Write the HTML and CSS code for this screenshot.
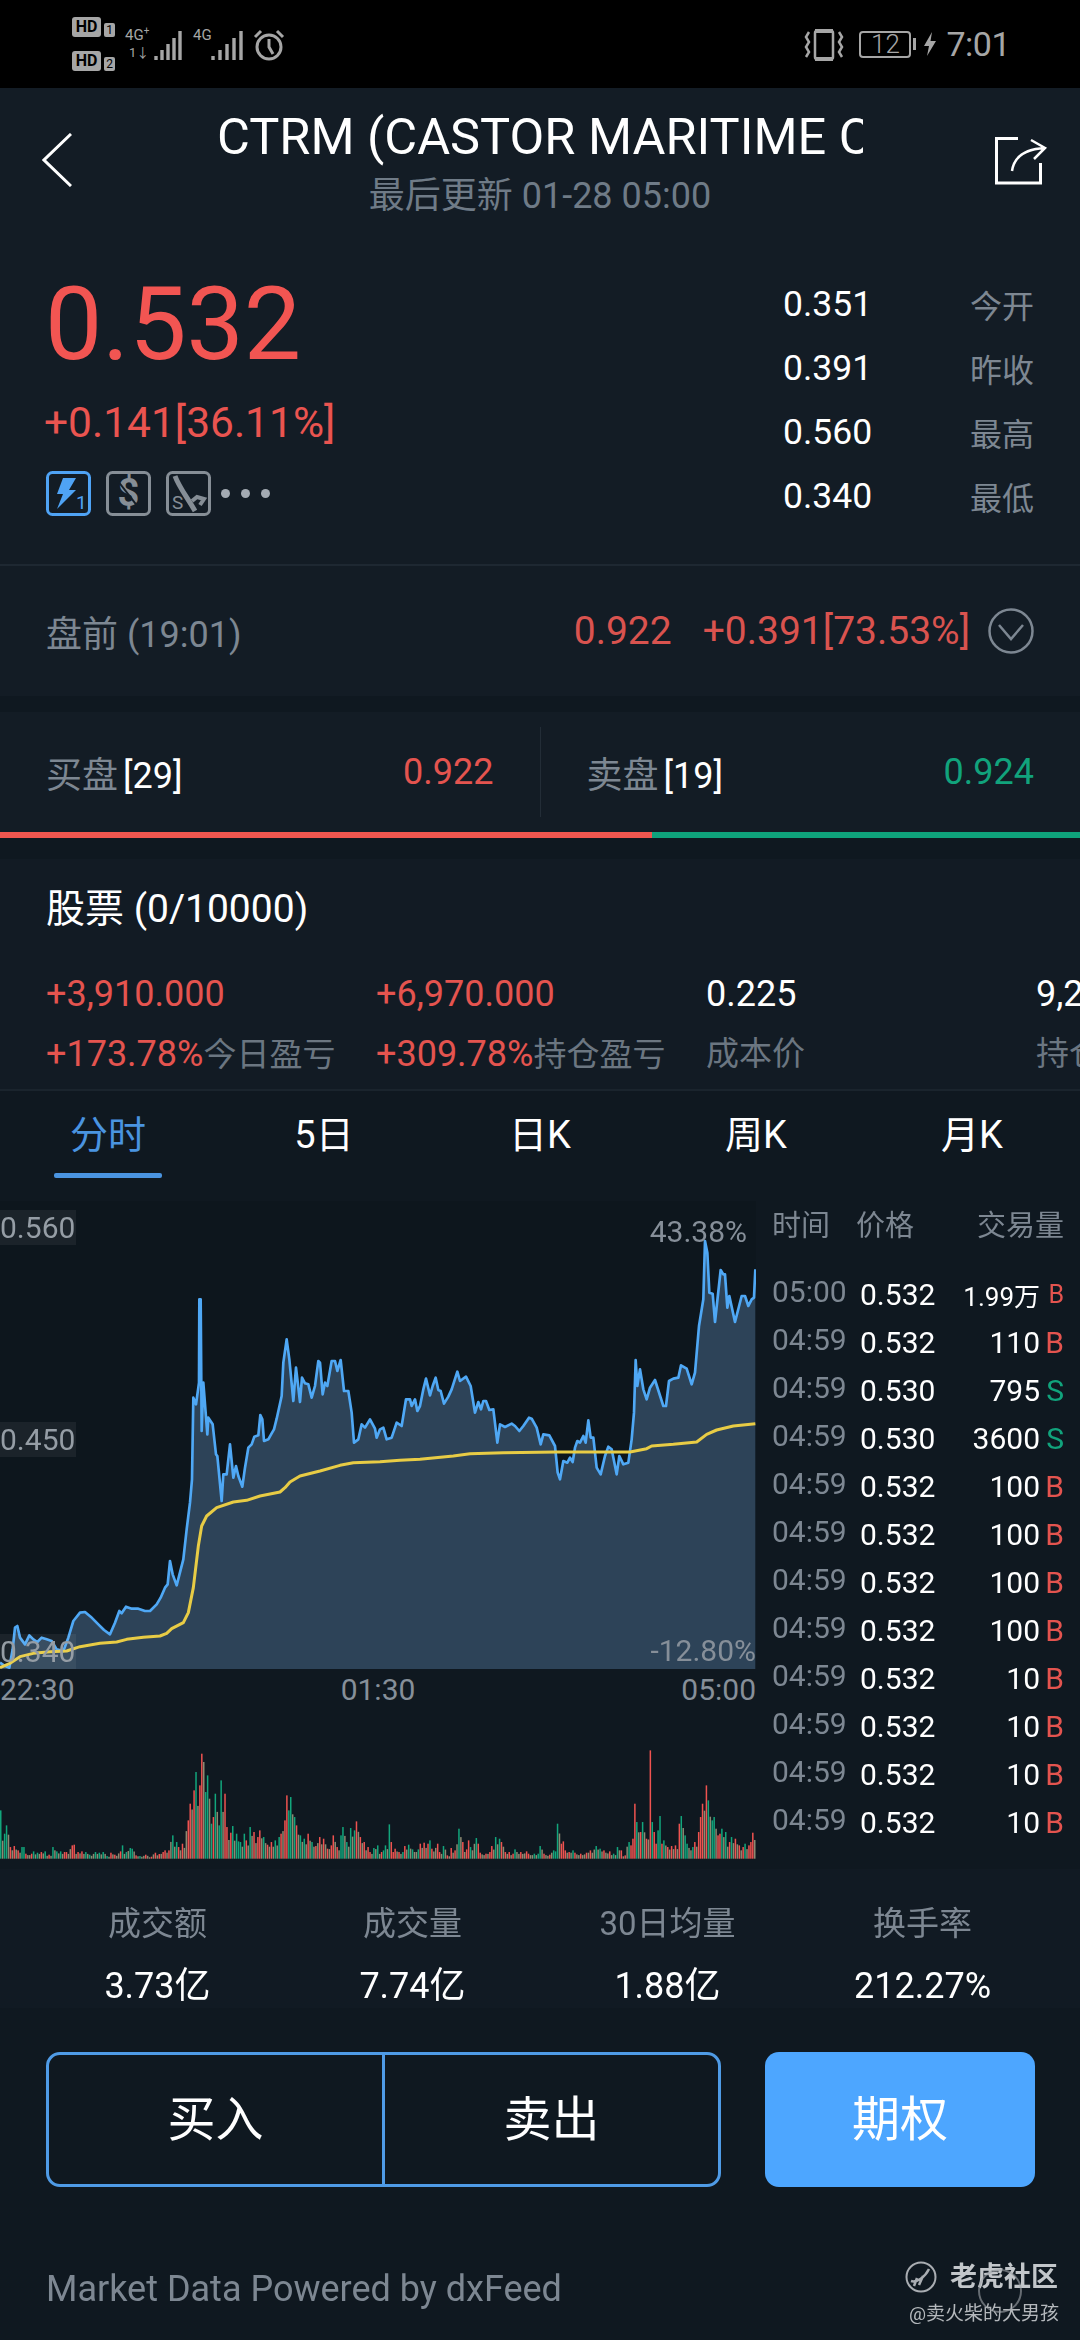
FILE: index.html
```html
<!DOCTYPE html>
<html lang="zh">
<head>
    <meta charset="UTF-8">
    <meta name="viewport" content="width=device-width, initial-scale=1.0">
    <title>CTRM</title>
    <link rel="stylesheet" href="styles.css">
</head>
<body>
    <div class="status-bar">
        <div class="hd-stack">
            <div class="hd"><span class="hd-box">HD</span><span class="hd-num">1</span></div>
            <div class="hd"><span class="hd-box">HD</span><span class="hd-num">2</span></div>
        </div>
        <div class="net net-first">
            <span class="net-text">4G<sup>+</sup></span>
            <span class="net-sub">1↓</span>
        </div>
        <svg class="bars" width="30" height="30" viewBox="0 0 30 30">
            <path d="M2 30V26M8 30V20M14 30V14M20 30V8M26 30V1" stroke="#a6a6a6" stroke-width="3.4"/>
        </svg>
        <div class="net net-second"><span class="net-text">4G</span></div>
        <svg class="bars" width="34" height="30" viewBox="0 0 34 30">
            <path d="M2 30V26M9 30V20M16 30V14M23 30V8M30 30V1" stroke="#a6a6a6" stroke-width="3.4"/>
        </svg>
        <svg class="alarm" width="32" height="32" viewBox="0 0 32 32" fill="none" stroke="#a6a6a6" stroke-width="3">
            <circle cx="16" cy="18" r="12"/>
            <path d="M16 10V18L20 25M2 8L8 2M30 8L24 2"/>
        </svg>
        <svg class="vibrate" width="40" height="32" viewBox="0 0 40 32" fill="none" stroke="#a6a6a6" stroke-width="2.5">
            <rect x="11" y="2" width="18" height="28" rx="2"/>
            <path d="M11 2H29" stroke-width="4"/>
            <path d="M11 30H29" stroke-width="4"/>
            <path d="M5 3L2 8L5 13L2 18L5 23L2 28M35 3L38 8L35 13L38 18L35 23L38 28"/>
        </svg>
        <div class="battery">12</div>
        <span class="battery-nub"></span>
        <svg class="bolt" width="12" height="24" viewBox="0 0 12 24">
            <path d="M8 0L0 14H5L3 24L12 9H6.5Z" fill="#a6a6a6"/>
        </svg>
        <span class="clock">7:01</span>
    </div>

    <div class="header">
        <svg class="back" width="30" height="54" viewBox="0 0 30 54" fill="none" stroke="#fff" stroke-width="3">
            <path d="M29 1L2 27L29 53"/>
        </svg>
        <div class="title-block">
            <div class="title">CTRM (CASTOR MARITIME CORP)</div>
            <div class="subtitle">最后更新 01-28 05:00</div>
        </div>
        <svg class="share" width="54" height="48" viewBox="0 0 54 48" fill="none" stroke="#fff" stroke-width="3">
            <path d="M23 1.5H1.5V46H45.5V26"/>
            <path d="M17 34C19 20 30 12 50 11M36 3L50 11L39 22" stroke-width="2.5"/>
        </svg>
    </div>

    <div class="quote">
        <div class="quote-main">
            <div class="price">0.532</div>
            <div class="change">+0.141[36.11%]</div>
            <div class="badges">
                <svg width="45" height="45" viewBox="0 0 45 45" fill="none">
                    <rect x="1.5" y="1.5" width="42" height="42" rx="5" stroke="#4fa3f5" stroke-width="3"/>
                    <path d="M17 7H30L23 19H30L11 38L17 23H11Z" fill="#4fa3f5"/>
                    <text x="30" y="38" class="badge-text-blue">1</text>
                </svg>
                <svg width="45" height="45" viewBox="0 0 45 45" fill="none">
                    <rect x="1.5" y="1.5" width="42" height="42" rx="5" stroke="#868e96" stroke-width="3"/>
                    <text x="22.5" y="35" class="badge-dollar">$</text>
                    <path d="M8 5L36 41" stroke="#131c25" stroke-width="2"/>
                </svg>
                <svg width="45" height="45" viewBox="0 0 45 45" fill="none">
                    <rect x="1.5" y="1.5" width="42" height="42" rx="5" stroke="#868e96" stroke-width="3"/>
                    <path d="M9 5C13 16 21 26 29 40" stroke="#868e96" stroke-width="5"/>
                    <path d="M26 30L31 26L38 28L34 34" stroke="#868e96" stroke-width="4"/>
                    <text x="6" y="38" class="badge-text">S</text>
                </svg>
                <div class="dots"><span></span><span></span><span></span></div>
            </div>
        </div>
        <div class="quote-stats">
            <div class="stat-row"><span>0.351</span><span class="muted">今开</span></div>
            <div class="stat-row"><span>0.391</span><span class="muted">昨收</span></div>
            <div class="stat-row"><span>0.560</span><span class="muted">最高</span></div>
            <div class="stat-row"><span>0.340</span><span class="muted">最低</span></div>
        </div>
    </div>

    <div class="pre-market">
        <span class="pre-label">盘前 (19:01)</span>
        <span class="pre-price">0.922</span>
        <span class="pre-change">+0.391[73.53%]</span>
        <svg class="pre-toggle" width="46" height="46" viewBox="0 0 46 46" fill="none" stroke="#7d8792" stroke-width="2.5">
            <circle cx="23" cy="23" r="21.5"/>
            <path d="M11 17L23 31L35 17"/>
        </svg>
    </div>

    <div class="book">
        <div class="book-side">
            <span class="muted book-name">买盘 <span class="white">[29]</span></span>
            <span class="red">0.922</span>
        </div>
        <div class="book-side book-right">
            <span class="muted book-name">卖盘 <span class="white">[19]</span></span>
            <span class="green">0.924</span>
        </div>
    </div>
    <div class="book-bar"><div class="bar-buy"></div><div class="bar-sell"></div></div>

    <div class="position">
        <div class="position-title">股票 (0/10000)</div>
        <div class="position-cols">
            <div class="pos-col">
                <div class="pos-top red">+3,910.000</div>
                <div class="pos-bottom"><span class="red">+173.78%</span>今日盈亏</div>
            </div>
            <div class="pos-col">
                <div class="pos-top red">+6,970.000</div>
                <div class="pos-bottom"><span class="red">+309.78%</span>持仓盈亏</div>
            </div>
            <div class="pos-col">
                <div class="pos-top">0.225</div>
                <div class="pos-bottom">成本价</div>
            </div>
            <div class="pos-col">
                <div class="pos-top">9,250</div>
                <div class="pos-bottom">持仓</div>
            </div>
        </div>
    </div>

    <div class="tabs">
        <div class="tab tab-active">分时</div>
        <div class="tab">5日</div>
        <div class="tab">日K</div>
        <div class="tab">周K</div>
        <div class="tab">月K</div>
    </div>

    <div class="chart-area">
        <div class="chart-col">
            <div class="price-chart">
                <canvas id="price-canvas" width="756" height="468"></canvas>
                <span class="axis-left axis-high">0.560</span>
                <span class="axis-left axis-mid">0.450</span>
                <span class="axis-left axis-low">0.340</span>
                <span class="axis-right axis-up">43.38%</span>
                <span class="axis-right axis-down">-12.80%</span>
            </div>
            <div class="time-axis"><span>22:30</span><span>01:30</span><span>05:00</span></div>
            <canvas id="volume-canvas" width="756" height="148"></canvas>
        </div>
        <div class="trades">
            <div class="trades-head">
                <span class="head-time">时间</span>
                <span class="head-price">价格</span>
                <span class="head-vol">交易量</span>
            </div>
            <div class="trade-row"><span class="t-time">05:00</span><span class="t-price">0.532</span><span class="t-vol t-small">1.99万</span><span class="t-side t-small red">B</span></div>
            <div class="trade-row"><span class="t-time">04:59</span><span class="t-price">0.532</span><span class="t-vol">110</span><span class="t-side red">B</span></div>
            <div class="trade-row"><span class="t-time">04:59</span><span class="t-price">0.530</span><span class="t-vol">795</span><span class="t-side green">S</span></div>
            <div class="trade-row"><span class="t-time">04:59</span><span class="t-price">0.530</span><span class="t-vol">3600</span><span class="t-side green">S</span></div>
            <div class="trade-row"><span class="t-time">04:59</span><span class="t-price">0.532</span><span class="t-vol">100</span><span class="t-side red">B</span></div>
            <div class="trade-row"><span class="t-time">04:59</span><span class="t-price">0.532</span><span class="t-vol">100</span><span class="t-side red">B</span></div>
            <div class="trade-row"><span class="t-time">04:59</span><span class="t-price">0.532</span><span class="t-vol">100</span><span class="t-side red">B</span></div>
            <div class="trade-row"><span class="t-time">04:59</span><span class="t-price">0.532</span><span class="t-vol">100</span><span class="t-side red">B</span></div>
            <div class="trade-row"><span class="t-time">04:59</span><span class="t-price">0.532</span><span class="t-vol">10</span><span class="t-side red">B</span></div>
            <div class="trade-row"><span class="t-time">04:59</span><span class="t-price">0.532</span><span class="t-vol">10</span><span class="t-side red">B</span></div>
            <div class="trade-row"><span class="t-time">04:59</span><span class="t-price">0.532</span><span class="t-vol">10</span><span class="t-side red">B</span></div>
            <div class="trade-row"><span class="t-time">04:59</span><span class="t-price">0.532</span><span class="t-vol">10</span><span class="t-side red">B</span></div>
        </div>
    </div>

    <div class="summary">
        <div class="summary-item"><div class="summary-label">成交额</div><div class="summary-value">3.73亿</div></div>
        <div class="summary-item"><div class="summary-label">成交量</div><div class="summary-value">7.74亿</div></div>
        <div class="summary-item"><div class="summary-label">30日均量</div><div class="summary-value">1.88亿</div></div>
        <div class="summary-item"><div class="summary-label">换手率</div><div class="summary-value">212.27%</div></div>
    </div>

    <div class="actions">
        <div class="trade-box">
            <div class="trade-btn trade-buy">买入</div>
            <div class="trade-btn">卖出</div>
        </div>
        <div class="option-btn">期权</div>
    </div>

    <div class="footer">
        Market Data Powered by dxFeed
        <div class="watermark">
            <div class="watermark-top">
                <svg width="32" height="32" viewBox="0 0 32 32" fill="none" stroke="#a9adb2" stroke-width="2">
                    <circle cx="16" cy="16" r="14.5"/>
                    <path d="M6 20C12 22 20 16 24 8M9 25L12 17M14 24L18 15" stroke-width="2.5"/>
                </svg>
                <span>老虎社区</span>
            </div>
            <div class="watermark-user">@卖火柴的大男孩</div>
            <span class="watermark-ring"></span>
        </div>
    </div>

    <script src="chart.js"></script>
</body>
</html>
```

FILE: styles.css
```css
* {
    box-sizing: border-box;
}

body {
    font-family: Roboto, "Noto Sans CJK SC", sans-serif;
    margin: 0;
    width: 1080px;
    height: 2340px;
    overflow: hidden;
    background: #0f1820;
    color: #fff;
}

.muted {
    color: #7d8792;
}

.white {
    color: #fff;
}

.red {
    color: #e4544f;
}

.green {
    color: #11a37c;
}

/* status bar */
.status-bar {
    height: 88px;
    background: #000;
    display: flex;
    align-items: center;
    padding-left: 72px;
    color: #a6a6a6;
}

.hd-stack {
    display: flex;
    flex-direction: column;
    gap: 14px;
}

.hd {
    display: flex;
    align-items: flex-end;
    gap: 3px;
}

.hd-box {
    background: #a6a6a6;
    color: #000;
    font-size: 16px;
    font-weight: 700;
    line-height: 20px;
    width: 29px;
    text-align: center;
    border-radius: 3px;
}

.hd-num {
    font-size: 12px;
    line-height: 14px;
    width: 11px;
    text-align: center;
    background: #a6a6a6;
    color: #000;
    border-radius: 2px;
}

.net {
    display: flex;
    flex-direction: column;
    margin-left: 10px;
    width: 29px;
    height: 34px;
}

.net-second {
    margin-left: 9px;
    width: 18px;
}

.net-text {
    font-size: 15px;
    line-height: 16px;
    white-space: nowrap;
}

.net-text sup {
    font-size: 10px;
    line-height: 0;
}

.net-sub {
    font-size: 13px;
    line-height: 16px;
    margin-top: 2px;
    padding-left: 4px;
}

.alarm {
    margin-left: 8px;
    margin-top: 2px;
}

.bars {
    margin-top: 2px;
}

.vibrate {
    margin-left: auto;
    margin-top: 1px;
}

.battery {
    margin-left: 15px;
    width: 52px;
    height: 27px;
    border: 2px solid #a6a6a6;
    border-radius: 4px;
    font-size: 26px;
    font-weight: 300;
    line-height: 23px;
    text-align: center;
}

.battery-nub {
    width: 3px;
    height: 12px;
    margin-left: 2px;
    background: #a6a6a6;
}

.bolt {
    margin-left: 8px;
}

.clock {
    font-size: 34px;
    letter-spacing: -0.5px;
    line-height: 40px;
    margin-left: 10px;
    margin-right: 70px;
}

/* header */
.header {
    height: 162px;
    background: #131c25;
    display: flex;
    align-items: flex-start;
}

.back {
    margin: 45px 0 0 42px;
}

.title-block {
    width: 646px;
    margin-left: 145px;
    padding-top: 19px;
    text-align: center;
}

.title {
    font-size: 50.5px;
    line-height: 60px;
    white-space: nowrap;
    overflow: hidden;
    text-align: left;
}

.subtitle {
    font-size: 36px;
    line-height: 40px;
    margin-top: 9px;
    color: #6f7b87;
}

.share {
    margin: 49px 0 0 132px;
}

/* quote */
.quote {
    height: 316px;
    background: #131c25;
    border-bottom: 2px solid #1e2832;
    display: flex;
    justify-content: space-between;
    padding: 22px 46px 0;
}

.price {
    font-size: 102px;
    line-height: 104px;
    margin-left: -1px;
    color: #f25552;
}

.change {
    font-size: 42.5px;
    line-height: 50px;
    margin-top: 22px;
    margin-left: -2px;
    color: #ea5450;
}

.badges {
    display: flex;
    gap: 15px;
    align-items: center;
    margin-top: 23px;
}

.badge-text-blue {
    font-size: 19px;
    fill: #4fa3f5;
}

.badge-text {
    font-size: 19px;
    fill: #868e96;
}

.badge-dollar {
    font-size: 38px;
    font-weight: 700;
    text-anchor: middle;
    fill: #868e96;
}

.dots {
    display: flex;
    gap: 11px;
    margin-left: -5px;
}

.dots span {
    width: 9px;
    height: 9px;
    border-radius: 50%;
    background: #a4abb3;
}

.quote-stats {
    width: 251px;
}

.stat-row {
    height: 64px;
    display: flex;
    justify-content: space-between;
    align-items: center;
    font-size: 35.5px;
}

.stat-row .muted {
    font-size: 32px;
}

/* pre market */
.pre-market {
    height: 130px;
    background: #131c25;
    display: flex;
    align-items: center;
    padding: 0 46px;
    font-size: 39px;
    color: #d9534f;
}

.pre-label {
    font-size: 36px;
    color: #7d8792;
    margin-right: auto;
}

.pre-price {
    margin-right: 31px;
}

.pre-toggle {
    margin-left: 18px;
}

/* bid and ask */
.book {
    height: 120px;
    margin-top: 16px;
    background: #131c25;
    display: flex;
    align-items: center;
    font-size: 36px;
}

.book-side {
    flex: 1;
    display: flex;
    justify-content: space-between;
    align-items: center;
    height: 90px;
    padding: 0 46px;
}

.book-name {
    word-spacing: -4px;
}

.book-right {
    border-left: 1px solid #232d37;
}

.book-bar {
    height: 6px;
    display: flex;
}

.bar-buy {
    width: 652px;
    background: #f0564f;
}

.bar-sell {
    flex: 1;
    background: #0fa37c;
}

/* position */
.position {
    height: 230px;
    margin-top: 21px;
    padding: 25px 0 0 46px;
    background: #121b24;
    overflow: hidden;
}

.position-title {
    font-size: 39px;
    line-height: 50px;
}

.position-cols {
    display: flex;
    margin-top: 38px;
}

.pos-col {
    flex: 0 0 330px;
}

.pos-top {
    font-size: 36px;
    line-height: 44px;
}

.pos-bottom {
    font-size: 33px;
    line-height: 44px;
    margin-top: 16px;
    color: #6b7681;
    white-space: nowrap;
}

.pos-bottom .red {
    font-size: 36px;
}

/* tabs */
.tabs {
    height: 112px;
    border-top: 2px solid #1a242d;
    display: grid;
    grid-template-columns: repeat(5, 1fr);
    background: #0f1820;
}

.tab {
    font-size: 38px;
    line-height: 88px;
    text-align: center;
    position: relative;
}

.tab-active {
    color: #4a94e0;
}

.tab-active::after {
    content: "";
    position: absolute;
    left: 54px;
    right: 54px;
    top: 82px;
    height: 5px;
    border-radius: 2px;
    background: #4a94e0;
}

/* chart */
.chart-area {
    height: 668px;
    display: flex;
}

.chart-col {
    width: 756px;
}

.price-chart {
    position: relative;
    height: 468px;
    background: #0d161d;
}

canvas {
    display: block;
}

.axis-left {
    position: absolute;
    left: 0;
    width: 76px;
    height: 35px;
    font-size: 30px;
    line-height: 35px;
    background: rgba(255, 255, 255, 0.06);
    color: #959da5;
}

.axis-high {
    top: 9px;
}

.axis-mid {
    top: 221px;
}

.axis-low {
    top: 433px;
}

.axis-right {
    position: absolute;
    right: 0;
    font-size: 30px;
    line-height: 36px;
    color: #868f99;
}

.axis-up {
    top: 13px;
    right: 9px;
}

.axis-down {
    top: 432px;
}

.time-axis {
    height: 44px;
    display: flex;
    justify-content: space-between;
    font-size: 30px;
    line-height: 42px;
    color: #868f99;
}

.trades {
    flex: 1;
    padding-left: 16px;
    padding-right: 16px;
}

.trades-head {
    height: 50px;
    margin-bottom: 19px;
    display: flex;
    font-size: 29px;
    line-height: 50px;
    color: #7d8792;
}

.head-price {
    margin-left: 26px;
}

.head-vol {
    margin-left: auto;
}

.trade-row {
    height: 48px;
    display: flex;
    align-items: center;
    font-size: 30px;
}

.t-time {
    width: 88px;
    padding-bottom: 6px;
    color: #7d8792;
}

.t-vol {
    flex: 1;
    text-align: right;
}

.t-side {
    width: 24px;
    text-align: right;
    font-size: 30px;
}

.t-small {
    font-size: 26px;
}

.t-side.t-small {
    font-size: 25px;
}

/* summary */
.summary {
    height: 139px;
    padding: 33px 30px 0;
    display: grid;
    grid-template-columns: repeat(4, 1fr);
    background: #111a23;
    text-align: center;
}

.summary-label {
    font-size: 33px;
    line-height: 44px;
    color: #7d8792;
}

.summary-value {
    font-size: 36px;
    line-height: 46px;
    margin-top: 17px;
}

/* buy, sell, options */
.actions {
    padding: 44px 45px 0 46px;
    display: flex;
    justify-content: space-between;
}

.trade-box {
    width: 675px;
    height: 135px;
    border: 3px solid #4f9be6;
    border-radius: 14px;
    display: flex;
}

.trade-btn {
    flex: 1;
    font-size: 48px;
    line-height: 129px;
    text-align: center;
}

.trade-buy {
    border-right: 3px solid #4f9be6;
}

.option-btn {
    width: 270px;
    height: 135px;
    border-radius: 14px;
    background: #4da6ff;
    font-size: 48px;
    line-height: 135px;
    text-align: center;
}

/* footer */
.footer {
    position: relative;
    padding: 78px 0 0 46px;
    font-size: 36px;
    line-height: 48px;
    color: #7d8792;
}

.watermark {
    position: absolute;
    top: 72px;
    left: 905px;
    width: 160px;
}

.watermark-top {
    display: flex;
    align-items: center;
    gap: 13px;
    font-size: 27px;
    line-height: 36px;
    font-weight: 700;
    color: #c2c6ca;
}

.watermark-user {
    font-size: 19px;
    line-height: 26px;
    margin-top: 6px;
    padding-left: 4px;
    color: #b4b8bc;
    white-space: nowrap;
}

.watermark-ring {
    position: absolute;
    left: 73px;
    top: 10px;
    width: 44px;
    height: 44px;
    border: 2px solid rgba(160, 165, 170, 0.6);
    border-radius: 50%;
}
```

FILE: chart.js
```js
// Puntos trazados a 3x: x / 3, y / 3 + 25 dan la posicion en el canvas
const SHIFT = 1140;

const priceLeft = [0,1310,15,1320,28,1325,38,1270,45,1205,52,1200,60,1235,75,1255,88,1228,100,1240,112,1248,125,1235,140,1240,155,1245,170,1270,190,1275,205,1235,220,1185,240,1160,255,1158,272,1172,295,1195,312,1212,330,1225,345,1190,358,1155,365,1162,378,1142,395,1148,415,1148,435,1155,450,1155,470,1135,482,1115,495,1085,503,1075,510,1005,518,1045,530,1078,550,1000,560,910,570,830,576,760,580,515,588,535,597,470,598,220,602,220,605,615,610,470,622,625,625,575,638,595,648,685,652,690,665,825,670,745,680,745,690,655,700,755,708,720,715,750,727,782,735,725,745,665,755,655,763,632,775,628,781,567,787,580,792,645,805,640,815,622,822,610,830,578,845,510,850,410,860,340,868,400,880,525,888,425,900,528,906,455,915,472,925,475,935,515,945,480,955,405,960,410,968,505,975,470,982,480,995,405,1005,405,1012,435,1022,402,1032,495,1045,495,1055,560,1062,650,1075,640,1085,595,1095,605,1110,580,1125,608,1130,635];
const priceRight = [0,610,10,605,20,640,35,635,50,590,65,600,78,520,90,520,95,540,105,520,112,555,120,540,130,490,138,458,150,508,158,480,167,455,175,492,182,495,192,533,205,512,215,490,232,437,240,465,258,452,272,480,285,560,295,528,303,550,310,525,318,525,328,552,340,550,352,650,360,595,375,603,395,593,405,600,418,615,430,600,447,575,455,578,470,605,482,655,490,625,508,628,525,660,533,740,540,760,550,705,562,710,570,695,578,708,585,665,592,645,600,650,610,630,617,650,625,583,632,635,640,635,650,725,662,745,675,690,685,662,695,670,710,745,718,690,730,715,745,710,755,640,762,560,767,402,772,480,780,430,790,490,800,520,810,485,825,462,850,540,858,540,867,465,880,458,895,455,903,418,920,428,935,475,945,440,957,300,970,220,975,45,982,80,988,200,998,203,1005,288,1022,132,1030,145,1035,145,1042,245,1048,210,1065,288,1085,210,1095,210,1105,240,1115,220,1122,215,1126,130];
const avgLeft = [0,1325,30,1312,60,1292,100,1282,150,1277,200,1275,240,1262,300,1252,350,1248,380,1240,430,1234,480,1230,500,1222,515,1208,550,1190,565,1160,580,1085,595,960,605,900,620,870,650,845,700,828,740,823,780,810,840,798,855,785,870,768,900,750,960,735,1020,718,1060,710];
const avgRight = [0,707,60,703,120,700,220,690,270,683,370,680,530,678,750,678,800,668,815,660,880,655,950,648,980,625,1010,612,1060,600,1126,593];

// Volumen: x, alto; positivo rojo, negativo verde
const volLeft = [0,-145,9,-75,20,-100,30,35,42,38,54,25,62,-35,70,-35,78,15,90,15,96,-22,108,-18,120,20,132,-22,144,12,158,-35,170,-22,180,-22,190,20,200,20,212,40,218,42,230,20,242,22,256,-20,268,-12,285,-20,297,-18,310,-20,320,-8,333,18,345,12,358,22,367,-40,375,-20,386,-32,397,-30,408,10,420,-8,437,12,450,6,462,18,475,14,487,20,495,25,505,25,515,-70,525,-50,535,35,548,45,560,115,568,165,578,205,587,-260,595,220,601,315,606,-403,615,-200,623,-250,632,-105,640,125,646,-195,655,-100,663,-235,670,195,677,95,688,78,698,-98,705,-75,715,-52,722,-50,730,-75,737,55,750,-95,760,80,770,65,780,85,790,-65,800,42,812,50,825,-55,835,-65,843,75,850,115,860,190,866,-145,872,-185,882,-125,890,100,900,-70,912,-60,924,75,935,-50,945,38,955,65,970,60,980,30,990,40,1000,70,1012,35,1020,-70,1028,-95,1040,-50,1052,-92,1064,-85,1070,112,1080,65,1090,50,1100,35,1110,20,1118,-32,1130,-40];
const volRight = [0,20,10,-25,17,-40,23,-103,30,50,38,20,45,30,55,20,65,-20,75,38,85,-42,97,-28,110,-28,120,45,130,48,140,45,145,-55,155,30,168,45,178,20,190,-38,200,10,212,32,222,25,232,60,237,-90,245,50,255,28,265,55,272,-35,284,-62,292,45,300,18,315,15,325,20,335,38,345,-65,355,-60,362,50,375,20,385,20,397,15,405,-28,420,20,435,22,445,15,460,-15,475,-15,480,-38,490,15,505,12,518,-25,525,-22,533,-105,540,45,545,52,555,25,565,20,575,-25,585,18,600,15,615,18,628,25,645,-38,660,-30,672,25,685,22,700,-15,713,-35,722,25,733,10,743,-50,750,40,758,60,765,165,771,-110,780,80,788,-110,795,60,800,80,806,325,812,-110,818,80,825,45,830,-85,835,-128,843,45,852,-55,860,35,870,38,885,40,895,105,904,-128,912,-70,920,-45,935,-35,945,50,952,80,958,125,963,165,968,200,975,220,980,205,985,-175,993,-115,1002,-125,1010,70,1018,75,1025,-90,1035,-80,1045,50,1055,-65,1065,60,1075,40,1085,35,1092,-45,1102,40,1110,50,1118,78,1126,8];

function joinPoints(left, right) {
    const points = [];
    for (let i = 0; i < left.length; i += 2) {
        points.push([left[i], left[i + 1]]);
    }
    for (let i = 0; i < right.length; i += 2) {
        points.push([right[i] + SHIFT, right[i + 1]]);
    }
    return points;
}

function tracePath(ctx, points) {
    ctx.beginPath();
    points.forEach((p, i) => {
        if (i === 0) ctx.moveTo(p[0], p[1]);
        else ctx.lineTo(p[0], p[1]);
    });
}

function drawPrice() {
    const ctx = document.getElementById('price-canvas').getContext('2d');
    const price = joinPoints(priceLeft, priceRight);
    const avg = joinPoints(avgLeft, avgRight);
    const last = price[price.length - 1];

    ctx.scale(1 / 3, 1 / 3);
    ctx.translate(0, 75);
    ctx.lineJoin = 'round';

    tracePath(ctx, price);
    ctx.lineTo(last[0], 1330);
    ctx.lineTo(0, 1330);
    ctx.closePath();
    ctx.fillStyle = '#2d4358';
    ctx.fill();

    tracePath(ctx, price);
    ctx.strokeStyle = '#4fa8f5';
    ctx.lineWidth = 8;
    ctx.stroke();

    tracePath(ctx, avg);
    ctx.strokeStyle = '#e8cc45';
    ctx.lineWidth = 9;
    ctx.stroke();
}

function drawVolume() {
    const ctx = document.getElementById('volume-canvas').getContext('2d');
    const vol = joinPoints(volLeft, volRight);
    const base = 145.7;

    for (let i = 0; i < 391; i++) {
        const x = i * 5.8;
        let near = vol[0];
        vol.forEach((v) => {
            if (Math.abs(v[0] - x) < Math.abs(near[0] - x)) near = v;
        });
        const main = Math.abs(near[0] - x) <= 2.9;
        const h = Math.abs(near[1]) / 3 * (main ? 1 : 0.72);
        ctx.fillStyle = near[1] > 0 ? '#ef5350' : '#12a67c';
        if (!main) ctx.fillStyle = '#8c8a72';
        ctx.fillRect(x / 3, base - h, 1.5, h);
    }
}

drawPrice();
drawVolume();
```
